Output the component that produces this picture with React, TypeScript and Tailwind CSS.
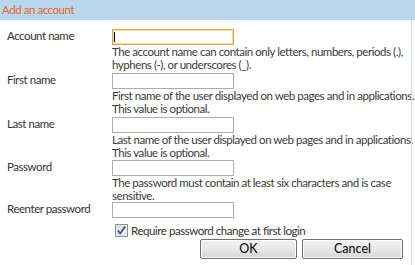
type RowProps = {
  label: string
  help?: string[]
  focused?: boolean
  gap?: string
}

function Field({ label, help, focused, gap }: RowProps) {
  return (
    <div className={`flex ${gap ?? ""}`}>
      <div className="w-[112px] shrink-0 pl-[7px] leading-[13px] text-[#333]">{label}</div>
      <div className="flex flex-col">
        {focused ? (
          <div className="relative h-[16px] w-[122px] border border-[#e0a94e] bg-white shadow-[inset_0_0_0_1px_#f6dca6]">
            <div className="absolute left-[1px] top-[2px] h-[10px] w-px bg-black" />
          </div>
        ) : (
          <div className="h-[16px] w-[122px] border border-[#abadb3] bg-white" />
        )}
        {help && (
          <div className="text-[#3a3a3a] leading-[13px]">
            {help.map((line) => (
              <div key={line} className="whitespace-nowrap">
                {line}
              </div>
            ))}
          </div>
        )}
      </div>
    </div>
  )
}

function Checkbox() {
  return (
    <svg width="13" height="13" viewBox="0 0 13 13" className="shrink-0">
      <defs>
        <linearGradient id="cb" x1="0" y1="0" x2="1" y2="1">
          <stop offset="0" stopColor="#dcdcdc" />
          <stop offset="1" stopColor="#fbfbfb" />
        </linearGradient>
      </defs>
      <rect x="0.5" y="0.5" width="12" height="12" fill="#f4f4f4" stroke="#8e8f8f" />
      <rect x="2" y="2" width="9" height="9" fill="url(#cb)" stroke="#c2c2c2" strokeWidth="0.6" />
      <path d="M3 6.5 L5.2 9.5 L10.2 2.5" fill="none" stroke="#3d4f8f" strokeWidth="1.8" strokeLinejoin="round" />
    </svg>
  )
}

function Button({ children, width }: { children: string; width: string }) {
  return (
    <button
      className={`${width} h-[20px] rounded-[2px] border border-[#707070] bg-gradient-to-b from-[#f3f3f3] via-[#e8e8e8] to-[#d6d6d6] text-[12.5px] leading-[18px] tracking-normal text-black shadow-[inset_0_0_0_1px_#fcfcfc]`}
    >
      {children}
    </button>
  )
}

export default function App() {
  return (
    <div className="h-[265px] w-[415px] overflow-hidden bg-white font-['Lato',sans-serif] text-[11.5px] tracking-[-0.45px]">
      <div className="h-[20px] bg-[#b8d7ec] pl-[2px] leading-[19px] text-[#f0622d]">Add an account</div>
      <div className="flex">
        <div className="w-[411px] pt-[9px]">
          <Field
            label="Account name"
            focused
            help={["The account name can contain only letters, numbers, periods (.),", "hyphens (-), or underscores (_)."]}
          />
          <Field
            label="First name"
            gap="mt-[2px]"
            help={["First name of the user displayed on web pages and in applications.", "This value is optional."]}
          />
          <Field
            label="Last name"
            gap="mt-[2px]"
            help={["Last name of the user displayed on web pages and in applications.", "This value is optional."]}
          />
          <Field
            label="Password"
            gap="mt-[1px]"
            help={["The password must contain at least six characters and is case", "sensitive."]}
          />
          <Field label="Reenter password" gap="mt-0" />
          <div className="mt-[6px] flex items-center gap-[3px] pl-[115px] leading-[13px] text-[#333]">
            <Checkbox />
            <span>Require password change at first login</span>
          </div>
          <div className="mt-[2px] flex gap-[5px] pl-[200px]">
            <Button width="w-[97px]">OK</Button>
            <Button width="w-[101px]">Cancel</Button>
          </div>
        </div>
        <div className="h-[245px] w-px bg-[#c3ddef]" />
      </div>
    </div>
  )
}
